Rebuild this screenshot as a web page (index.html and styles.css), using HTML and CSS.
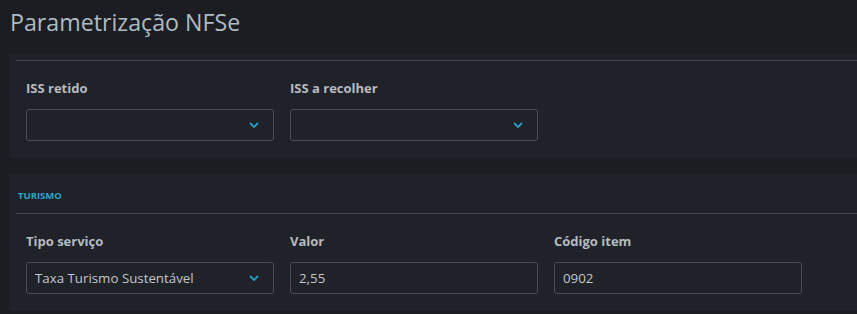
FILE: index.html
```html
<!DOCTYPE html>
<html lang="pt">
<head>
<meta charset="utf-8">
<link rel="stylesheet" href="styles.css">
</head>
<body>
<h1 class="page-title">Parametrização NFSe</h1>

<section class="card">
  <div class="card-header card-header--empty"></div>
  <div class="form-row">
    <div class="field">
      <label class="field-label">ISS retido</label>
      <div class="control select">
        <span class="control-text"></span>
        <svg class="chevron" width="10" height="6" viewBox="0 0 10 6"><path d="M1 1 L5 5 L9 1" fill="none" stroke="currentColor" stroke-width="1.8"/></svg>
      </div>
    </div>
    <div class="field">
      <label class="field-label">ISS a recolher</label>
      <div class="control select">
        <span class="control-text"></span>
        <svg class="chevron" width="10" height="6" viewBox="0 0 10 6"><path d="M1 1 L5 5 L9 1" fill="none" stroke="currentColor" stroke-width="1.8"/></svg>
      </div>
    </div>
  </div>
</section>

<section class="card card--second">
  <div class="card-header">TURISMO</div>
  <div class="form-row">
    <div class="field">
      <label class="field-label">Tipo serviço</label>
      <div class="control select">
        <span class="control-text">Taxa Turismo Sustentável</span>
        <svg class="chevron" width="10" height="6" viewBox="0 0 10 6"><path d="M1 1 L5 5 L9 1" fill="none" stroke="currentColor" stroke-width="1.8"/></svg>
      </div>
    </div>
    <div class="field">
      <label class="field-label">Valor</label>
      <div class="control"><span class="control-text">2,55</span></div>
    </div>
    <div class="field">
      <label class="field-label">Código item</label>
      <div class="control"><span class="control-text">0902</span></div>
    </div>
  </div>
</section>
</body>
</html>
```
FILE: styles.css
```css
* { box-sizing: border-box; }
html, body {
  margin: 0;
  padding: 0;
  background: #1b1d22;
  font-family: "Open Sans", "Noto Sans", sans-serif;
  overflow: hidden;
}
.page-title {
  margin: 0;
  padding: 6px 0 0 10px;
  height: 54px;
  font-size: 23.2px;
  line-height: 32px;
  font-weight: 400;
  color: #aebbc4;
}
.card {
  margin-left: 9px;
  margin-right: -20px;
  background: #1f2229;
  padding: 6px 0 17px 7px;
}
.card--second {
  margin-top: 16px;
  padding-top: 16px;
}
.card-header {
  border-bottom: 1px solid #41454c;
  font-size: 9.5px;
  font-weight: 700;
  line-height: 12px;
  color: #2aa6c6;
  padding: 0 0 11px 2px;
}
.card-header--empty {
  padding: 0;
  height: 1px;
  border-bottom: 0;
  background: #41454c;
}
.form-row {
  display: flex;
  gap: 16px;
  padding: 19px 0 0 10px;
}
.field {
  width: 248px;
  display: flex;
  flex-direction: column;
  gap: 13px;
}
.field-label {
  font-size: 13px;
  font-weight: 700;
  line-height: 16px;
  color: #b6bbc1;
}
.control {
  height: 32px;
  border: 1px solid #4a4e56;
  border-radius: 3px;
  display: flex;
  align-items: center;
  padding: 0 8px;
  background: #1f2229;
}
.control-text {
  flex: 1;
  font-size: 13.3px;
  color: #c3c7cc;
}
.chevron {
  color: #2b9cc2;
  margin-right: 6px;
}
```
